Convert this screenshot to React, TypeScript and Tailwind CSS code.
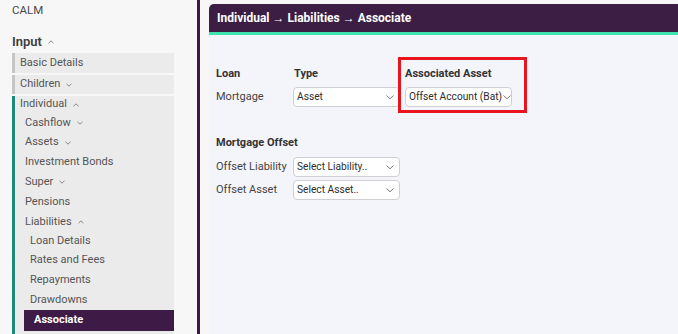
import React from "react";

const Chev = ({ up = false }: { up?: boolean }) => (
  <svg width="8" height="8" viewBox="0 0 8 8" className="ml-[5px] shrink-0" fill="none">
    <path d={up ? "M1.5 5.2 L4 2.8 L6.5 5.2" : "M1.5 2.8 L4 5.2 L6.5 2.8"} stroke="#8a8a8a" strokeWidth="1" />
  </svg>
);

const SelChev = () => (
  <svg width="10" height="10" viewBox="0 0 10 10" fill="none" className="shrink-0">
    <path d="M1.5 3.5 L5 6.8 L8.5 3.5" stroke="#7a7a7a" strokeWidth="1" />
  </svg>
);

const Select = ({ text, w = "w-[107px]" }: { text: string; w?: string }) => (
  <div className={`${w} h-[20px] bg-white border border-[#cfcfd4] rounded-[4px] flex items-center justify-between pl-[3px] pr-[4px] text-[10.2px] text-[#2d2d2d]`}>
    <span className="whitespace-nowrap">{text}</span>
    <SelChev />
  </div>
);

const Item = ({ label, h = "h-[20px]", pl = "pl-[10px]", chev }: { label: string; h?: string; pl?: string; chev?: "up" | "down" }) => (
  <div className={`${h} ${pl} flex items-center text-[11px] text-[#555]`}>
    <span>{label}</span>
    {chev && <Chev up={chev === "up"} />}
  </div>
);

export default function App() {
  return (
    <div className="w-[678px] h-[334px] overflow-hidden flex bg-[#f7f7f7]" style={{ fontFamily: "Roboto, 'Noto Sans', sans-serif" }}>
      {/* Sidebar */}
      <div className="w-[200px] shrink-0 bg-[#f7f7f7] border-r-[3px] border-[#3a1c44] flex flex-col">
        <div className="pl-[12px] pt-[3px] h-[15px] text-[11.5px] leading-[15px] text-[#4a4a4a]">CALM</div>
        <div className="pl-[12px] mt-[18px] h-[18px] flex items-center text-[13px] font-semibold text-[#3d3d3d]">
          Input
          <Chev up />
        </div>
        <div className="ml-[12px] w-[162px] mt-[2px] flex flex-col gap-[2px]">
          <div className="h-[20px] bg-[#ebebeb] border-l-[3px] border-[#c6c6c6] pl-[5px] flex items-center text-[11px] text-[#555]">Basic Details</div>
          <div className="h-[19px] bg-[#ebebeb] border-l-[3px] border-[#c6c6c6] pl-[5px] flex items-center text-[11px] text-[#555]">
            Children
            <Chev />
          </div>
          <div className="bg-[#ebebeb] border-l-[3px] border-[#1f8a7b] flex flex-col pb-[10px]">
            <Item label="Individual" h="h-[17px]" pl="pl-[5px]" chev="up" />
            <Item label="Cashflow" chev="down" />
            <Item label="Assets" h="h-[19px]" chev="down" />
            <Item label="Investment Bonds" />
            <Item label="Super" chev="down" />
            <Item label="Pensions" />
            <Item label="Liabilities" chev="up" />
            <Item label="Loan Details" h="h-[18px]" pl="pl-[15px]" />
            <Item label="Rates and Fees" pl="pl-[15px]" />
            <Item label="Repayments" pl="pl-[15px]" />
            <Item label="Drawdowns" pl="pl-[15px]" />
            <div className="ml-[9px] h-[21px] bg-[#3d1b46] pl-[10px] flex items-center text-[11px] font-bold text-white">Associate</div>
          </div>
        </div>
      </div>

      {/* Main */}
      <div className="flex-1 pl-[9px] pt-[4px] bg-[#f7f7f7]">
        <div className="relative h-full bg-[#f4f5fa] rounded-tl-[5px] overflow-hidden">
          <div className="h-[31px] bg-[#3c1e45] border-b-[3px] border-[#3fe3ad] pl-[8px] flex items-center text-[12px] font-bold text-white">
            Individual → Liabilities → Associate
          </div>
          <div className="pl-[7px] pt-[32px] text-[11px]">
            <div className="grid grid-cols-[77px_112px_auto] items-center">
              <div className="h-[14px] leading-[14px] font-bold text-[#333]">Loan</div>
              <div className="h-[14px] leading-[14px] font-bold text-[#333] pl-[1px]">Type</div>
              <div className="h-[14px] leading-[14px] font-bold text-[#333]">Associated Asset</div>
              <div className="mt-[6px] text-[#444]">Mortgage</div>
              <div className="mt-[6px]"><Select text="Asset" /></div>
              <div className="mt-[6px]"><Select text="Offset Account (Bat)" /></div>
            </div>
            <div className="mt-[29px] h-[14px] leading-[14px] font-bold text-[#333]">Mortgage Offset</div>
            <div className="mt-[7px] grid grid-cols-[77px_auto] gap-y-[3px] items-center">
              <div className="text-[#444]">Offset Liability</div>
              <Select text="Select Liability.." />
              <div className="text-[#444]">Offset Asset</div>
              <Select text="Select Asset.." />
            </div>
          </div>
          <div className="absolute left-[189px] top-[53px] w-[129px] h-[56px] border-[3px] border-[#e8141e] pointer-events-none" />
        </div>
      </div>
    </div>
  );
}
